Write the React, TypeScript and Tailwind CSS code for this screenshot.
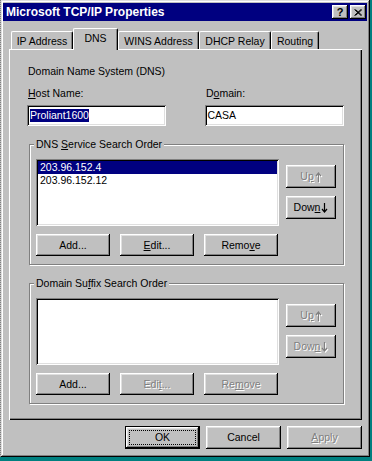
import React from "react";
import clsx from "clsx";

const raised =
  "bg-[#c0c0c0] shadow-[inset_-1px_-1px_0_#000,inset_1px_1px_0_#fff,inset_-2px_-2px_0_#808080,inset_2px_2px_0_#dfdfdf]";
const sunken =
  "bg-white shadow-[inset_1px_1px_0_#808080,inset_-1px_-1px_0_#fff,inset_2px_2px_0_#000,inset_-2px_-2px_0_#dfdfdf]";

function U({ children }: { children: React.ReactNode }) {
  return <span className="underline decoration-1 underline-offset-[1px]">{children}</span>;
}

// small bitmap-style arrow used on Up / Down buttons
function Arrow({ down, disabled }: { down?: boolean; disabled?: boolean }) {
  return (
    <svg
      width="7"
      height="10"
      viewBox="0 0 7 10"
      className={clsx("ml-[1px]", disabled && "drop-shadow-[1px_1px_0_#fff]")}
    >
      <path
        d={down ? "M3.5 0 V9 M1 6 L3.5 9 L6 6" : "M3.5 10 V1 M1 4 L3.5 1 L6 4"}
        stroke="currentColor"
        strokeWidth="1.2"
        fill="none"
      />
    </svg>
  );
}

function Btn({
  className,
  disabled,
  children,
}: {
  className: string;
  disabled?: boolean;
  children: React.ReactNode;
}) {
  return (
    <div
      className={clsx(
        "flex items-center justify-center leading-[13px]",
        raised,
        disabled ? "text-[#808080] [text-shadow:1px_1px_0_#fff]" : "text-black",
        className
      )}
    >
      {children}
    </div>
  );
}

function Tab({ label, w, active }: { label: string; w: string; active?: boolean }) {
  return (
    <div
      className={clsx(
        "flex justify-center border-t border-l border-r border-white border-r-black rounded-t-[2px] bg-[#c0c0c0] shadow-[inset_-1px_0_0_#808080] leading-[13px]",
        w,
        active ? "relative z-10 h-[22px] -mb-[1px] items-start pt-[3px]" : "h-[18px] items-center pt-[1px]"
      )}
    >
      {label}
    </div>
  );
}

function Group({
  title,
  items,
  second,
}: {
  title: React.ReactNode;
  items: string[];
  second?: boolean;
}) {
  return (
    <div className="relative ml-[2px] w-[315px] h-[121px] border border-[#808080] shadow-[1px_1px_0_#fff,inset_1px_1px_0_#fff] px-[6px] pt-[14px]">
      <span className="absolute -top-[7px] left-[4px] bg-[#c0c0c0] px-[2px] leading-[13px]">{title}</span>
      <div className="flex">
        <div className={clsx("w-[243px] h-[67px] p-[2px]", sunken)}>
          {items.map((it, i) => (
            <div
              key={it}
              className={clsx(
                "h-[13px] leading-[13px] pl-[2px]",
                i === 0 ? "bg-[#000080] text-white" : "text-black"
              )}
            >
              {it}
            </div>
          ))}
        </div>
        <div className="ml-[7px] pt-[6px] flex flex-col gap-[8px]">
          <Btn className="w-[50px] h-[23px]" disabled>
            U<U>p</U>
            <Arrow disabled />
          </Btn>
          <Btn className="w-[50px] h-[23px]" disabled={second}>
            Dow<U>n</U>
            <Arrow down disabled={second} />
          </Btn>
        </div>
      </div>
      <div className="mt-[8px] flex gap-[10px]">
        <Btn className="w-[74px] h-[22px]">Add...</Btn>
        {second ? (
          <>
            <Btn className="w-[74px] h-[22px]" disabled>
              Edi<U>t</U>...
            </Btn>
            <Btn className="w-[74px] h-[22px]" disabled>
              Re<U>m</U>ove
            </Btn>
          </>
        ) : (
          <>
            <Btn className="w-[74px] h-[22px]">
              <U>E</U>dit...
            </Btn>
            <Btn className="w-[74px] h-[22px]">
              Remo<U>v</U>e
            </Btn>
          </>
        )}
      </div>
    </div>
  );
}

export default function App() {
  return (
    <div className="w-[372px] h-[461px] bg-[#008080] font-['Liberation_Sans',Arial,sans-serif] text-[10.5px] text-black">
      <div className="w-[370px] h-[457px] bg-[#c0c0c0] border-l border-dotted border-l-[#808080] pl-[2px] pr-[3px] pt-[3px] shadow-[inset_-1px_-1px_0_#000,inset_1px_1px_0_#dfdfdf,inset_-2px_-2px_0_#808080,inset_2px_2px_0_#fff]">
        {/* title bar */}
        <div className="h-[18px] bg-[#000080] flex items-center justify-between">
          <span className="pl-[3px] text-[12px] font-bold text-white leading-none">
            Microsoft TCP/IP Properties
          </span>
          <div className="flex gap-[2px] pr-[1px]">
            <div className={clsx("w-[16px] h-[14px] flex items-center justify-center text-[11px] font-bold leading-none", raised)}>
              ?
            </div>
            <div className={clsx("w-[16px] h-[14px] flex items-center justify-center", raised)}>
              <svg width="8" height="7" viewBox="0 0 8 7">
                <path d="M0.5 0.5 L7 6.5 M1.5 0.5 L8 6.5 M7 0.5 L0.5 6.5 M8 0.5 L1.5 6.5" stroke="#000" strokeWidth="1" />
              </svg>
            </div>
          </div>
        </div>

        <div className="pl-[6px]">
          {/* tabs */}
          <div className="mt-[7px] h-[21px] ml-[2px] flex items-end">
            <Tab label="IP Address" w="w-[62px]" />
            <Tab label="DNS" w="w-[45px]" active />
            <Tab label="WINS Address" w="w-[81px]" />
            <Tab label="DHCP Relay" w="w-[72px]" />
            <Tab label="Routing" w="w-[48px]" />
          </div>

          {/* panel */}
          <div className="w-[353px] h-[371px] px-[18px] pt-[16px] shadow-[inset_1px_1px_0_#fff,inset_-1px_-1px_0_#000,inset_-2px_-2px_0_#808080]">
            <div className="pl-[1px] leading-[13px]">Domain Name System (DNS)</div>
            <div className="mt-[9px] flex leading-[13px]">
              <div className="w-[178px] pl-[1px]">
                <U>H</U>ost Name:
              </div>
              <div className="pl-[1px]">
                D<U>o</U>main:
              </div>
            </div>
            <div className="mt-[5px] flex">
              <div className={clsx("w-[139px] h-[21px] flex items-center pl-[3px]", sunken)}>
                <span className="bg-[#000080] text-white leading-[13px]">Proliant1600</span>
              </div>
              <div className={clsx("ml-[39px] w-[140px] h-[21px] flex items-center pl-[3px]", sunken)}>
                <span className="leading-[13px]">CASA</span>
              </div>
            </div>

            <div className="mt-[18px]">
              <Group
                title={
                  <>
                    DNS <U>S</U>ervice Search Order
                  </>
                }
                items={["203.96.152.4", "203.96.152.12"]}
              />
            </div>
            <div className="mt-[18px]">
              <Group
                title={
                  <>
                    Domain Su<U>f</U>fix Search Order
                  </>
                }
                items={[]}
                second
              />
            </div>
          </div>

          {/* bottom buttons */}
          <div className="mt-[6px] w-[353px] flex justify-end gap-[6px]">
            <div className="relative w-[75px] h-[23px] border border-black">
              <Btn className="w-full h-full">OK</Btn>
              <span className="absolute inset-[3px] border border-dotted border-black" />
            </div>
            <Btn className="w-[75px] h-[23px]">Cancel</Btn>
            <Btn className="w-[75px] h-[23px]" disabled>
              <U>A</U>pply
            </Btn>
          </div>
        </div>
      </div>
    </div>
  );
}
